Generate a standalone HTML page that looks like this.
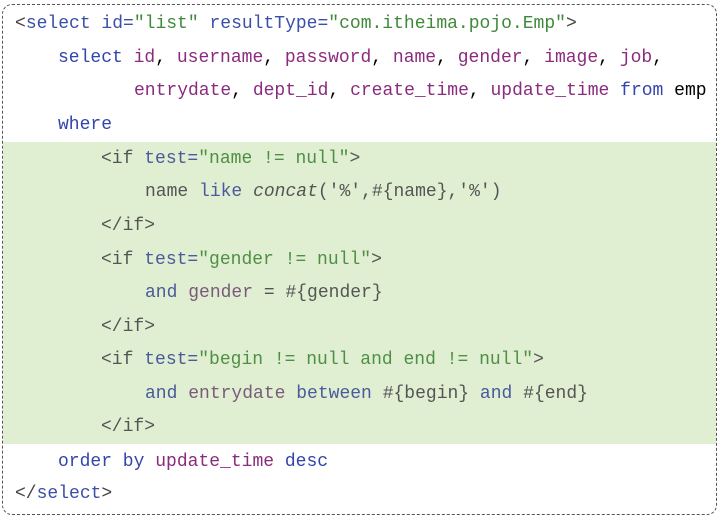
<!DOCTYPE html>
<html><head><meta charset="utf-8"><style>
body{margin:0;width:719px;height:517px;background:#fff;overflow:hidden;position:relative;font-family:"Liberation Mono",monospace;font-size:18px;}
.box{position:absolute;left:2px;top:4px;width:713px;height:509px;border:1px dashed #555;border-radius:10px;}
.band{position:absolute;left:3px;top:142px;width:713px;height:302px;background:#e0efd2;}
.w{position:absolute;left:0;top:2px;width:719px;height:517px;}
.l{position:absolute;white-space:pre;line-height:20px;}
.t{color:#444}.k{color:#3344aa}.p{color:#8b2b7e}.s{color:#3f8a3a}.a{color:#3a4fa8}
.g .t{color:#555}.g .k{color:#4a5a9a}.g .p{color:#7a5a7a}.g .s{color:#4f8f45}.g .n{color:#555}
</style></head><body>
<div class="band"></div>
<div class="box"></div>
<div class="w">
<div class="l" style="left:15px;top:12px"><span class="t">&lt;</span><span class="a">select id=</span><span class="s">"list"</span> <span class="a">resultType=</span><span class="s">"com.itheima.pojo.Emp"</span><span class="t">&gt;</span></div>
<div class="l" style="left:58px;top:46px"><span class="k">select</span> <span class="p">id</span>, <span class="p">username</span>, <span class="p">password</span>, <span class="p">name</span>, <span class="p">gender</span>, <span class="p">image</span>, <span class="p">job</span>,</div>
<div class="l" style="left:134px;top:79px"><span class="p">entrydate</span>, <span class="p">dept_id</span>, <span class="p">create_time</span>, <span class="p">update_time</span> <span class="k">from</span> emp</div>
<div class="l" style="left:58px;top:113px"><span class="k">where</span></div>
<div class="g">
<div class="l" style="left:101px;top:147px"><span class="t">&lt;if</span> <span class="k">test=</span><span class="s">"name != null"</span><span class="t">&gt;</span></div>
<div class="l" style="left:145px;top:180px"><span class="n">name</span> <span class="k">like</span> <span class="n" style="font-style:italic">concat</span><span class="n">('%',#{name},'%')</span></div>
<div class="l" style="left:101px;top:214px"><span class="t">&lt;/if&gt;</span></div>
<div class="l" style="left:101px;top:248px"><span class="t">&lt;if</span> <span class="k">test=</span><span class="s">"gender != null"</span><span class="t">&gt;</span></div>
<div class="l" style="left:145px;top:281px"><span class="k">and</span> <span class="p">gender</span> <span class="n">= #{gender}</span></div>
<div class="l" style="left:101px;top:315px"><span class="t">&lt;/if&gt;</span></div>
<div class="l" style="left:101px;top:348px"><span class="t">&lt;if</span> <span class="k">test=</span><span class="s">"begin != null and end != null"</span><span class="t">&gt;</span></div>
<div class="l" style="left:145px;top:382px"><span class="k">and</span> <span class="p">entrydate</span> <span class="k">between</span> <span class="n">#{begin}</span> <span class="k">and</span> <span class="n">#{end}</span></div>
<div class="l" style="left:101px;top:415px"><span class="t">&lt;/if&gt;</span></div>
</div>
<div class="l" style="left:58px;top:450px"><span class="k">order by</span> <span class="p">update_time</span> <span class="k">desc</span></div>
<div class="l" style="left:15px;top:482px"><span class="t">&lt;/</span><span class="a">select</span><span class="t">&gt;</span></div>
</div>
</body></html>
